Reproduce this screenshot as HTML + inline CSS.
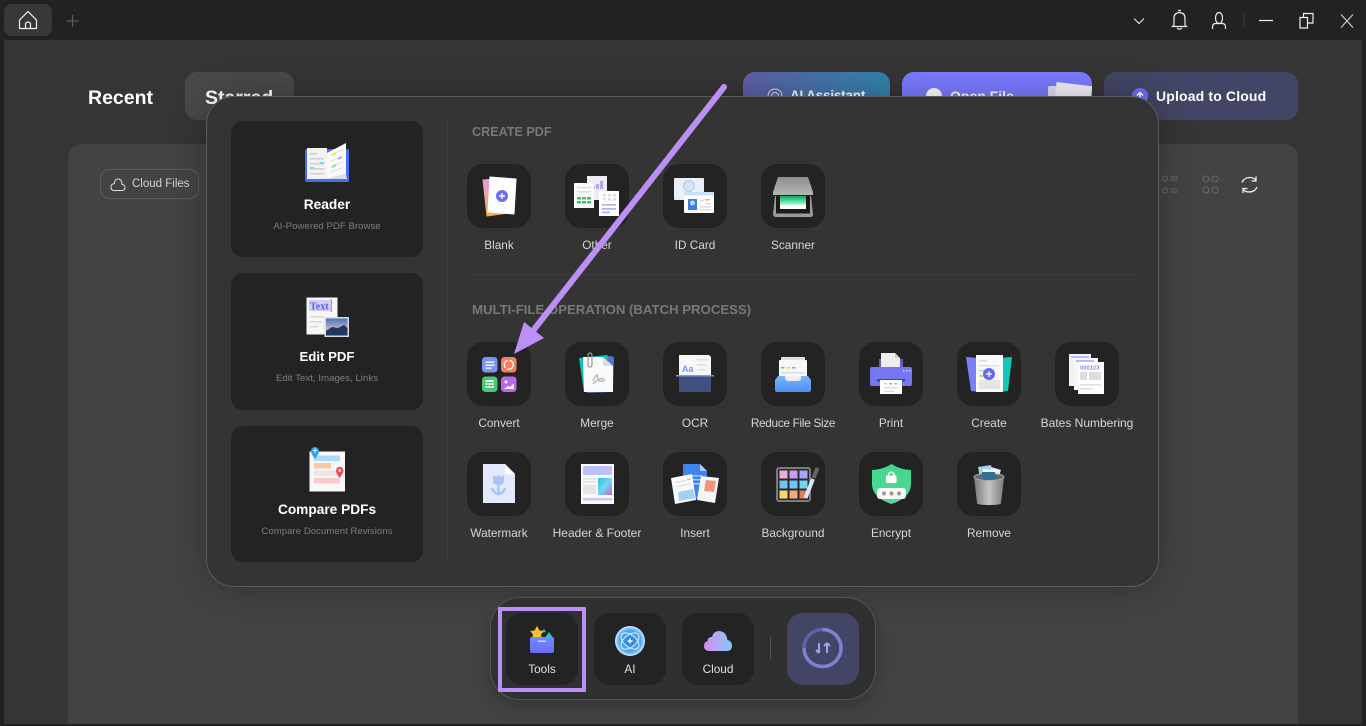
<!DOCTYPE html>
<html><head><meta charset="utf-8"><title>PDF Tools</title>
<style>
*{box-sizing:border-box;margin:0;padding:0}
html,body{width:1366px;height:726px;overflow:hidden;background:#222;font-family:"Liberation Sans",sans-serif;color:#fff}
.a{position:absolute}
.main{left:4px;top:40px;width:1358px;height:684px;background:#353535}
.btn{top:72px;height:48px;border-radius:12px;font-weight:700;font-size:14px}
.panel{left:206px;top:96px;width:953px;height:491px;background:#343434;border:1px solid #5c5c5c;border-radius:28px;box-shadow:0 0 34px rgba(0,0,0,.28)}
.lc{left:231px;width:192px;background:#232323;border-radius:12px}
.lt{left:231px;width:192px;text-align:center;font-weight:700;font-size:13.7px;line-height:18px;color:#fff}
.ls{left:231px;width:192px;text-align:center;font-size:9.5px;line-height:12px;letter-spacing:.08px;color:#7f7f7f}
.h{left:472px;font-size:13.2px;line-height:16px;font-weight:700;color:#787878}
.t{width:64px;height:64px;background:#232323;border-radius:16px}
.t svg{position:absolute;left:0;top:0;width:64px;height:64px}
.l{width:120px;text-align:center;font-size:11.8px;line-height:16px;color:#d6d6d6;white-space:nowrap}
.d{top:613px;width:72px;height:72px;background:#232323;border-radius:16px}
.d svg{position:absolute;left:0;top:0;width:72px;height:72px}
.dl{left:0;width:72px;top:48px;text-align:center;font-size:11.8px;line-height:16px;color:#e0e0e0}
svg{overflow:visible}
</style></head><body>

<!-- title bar -->
<div class="a" style="left:4px;top:4px;width:48px;height:32px;background:#383838;border-radius:8px"></div>
<svg class="a" style="left:0;top:0" width="1366" height="40" fill="none" stroke="#eee" stroke-width="1.2">
<path d="M19.500 28.500V20L28 11.500 36.500 20V28.500H19.500ZM25.500 28.500V23.500Q28 20.500 30.500 23.500V28.500"/>
<path d="M72.500 15V27M66.500 21H78.500" stroke="#5d5d5d"/>
<path d="M1134 18.500L1139 23.500 1144 18.500" stroke-width="1"/>
<path d="M1174 25V18Q1174 13 1179.500 12.500 1185 13 1185 18V25L1186.500 26.500H1172.500ZM1178 10.500H1181M1177 28Q1179.500 30.500 1182 28"/>
<ellipse cx="1219" cy="18" rx="3.500" ry="5.500"/><path d="M1212.500 29V27Q1212.500 23.500 1216 23.500H1222Q1225.500 23.500 1225.500 27V29"/>
<path d="M1244 14V26" stroke="#3a3a3a"/>
<path d="M1259 20.500H1273"/>
<path d="M1300 17.500H1307.500V28H1300ZM1303.500 17V13.500H1313V23H1308"/>
<path d="M1341 14.500L1353 27.500M1353 14.500L1341 27.500" stroke="#ccc"/>
</svg>

<div class="a main"></div>

<!-- page behind -->
<div class="a" style="left:88px;top:85px;font-weight:700;font-size:19.5px;line-height:26px;color:#fff">Recent</div>
<div class="a" style="left:185px;top:72px;width:109px;height:48px;background:#494949;border-radius:12px"></div>
<div class="a" style="left:205px;top:85px;font-weight:700;font-size:19.5px;line-height:26px">Starred</div>

<div class="a btn" style="left:743px;width:147px;background:linear-gradient(95deg,#5e5ea8,#2f84ac)"></div>
<div class="a btn" style="left:902px;width:190px;background:#7a7bff;overflow:hidden">
  <div class="a" style="left:146px;top:14px;width:32px;height:24px;background:#dcdcf6;border-radius:2px"></div>
  <div class="a" style="left:152px;top:12px;width:36px;height:40px;background:#f1f1f8;transform:rotate(7deg)"></div>
</div>
<svg class="a" style="left:765px;top:86px" width="22" height="14" fill="none" stroke="#ddd"><circle cx="10" cy="10" r="7"/><circle cx="10" cy="10" r="3.500"/></svg>
<div class="a" style="left:790px;top:87px;font-size:13.5px;font-weight:700;line-height:18px;letter-spacing:-.2px">AI Assistant</div>
<div class="a" style="left:926px;top:88px;width:16px;height:16px;border-radius:50%;background:#fff"></div>
<div class="a" style="left:950px;top:87px;font-size:14px;font-weight:700;line-height:18px">Open File</div>

<div class="a btn" style="left:1104px;width:194px;background:#434566"></div>
<div class="a" style="left:1132px;top:88px;width:16px;height:16px;border-radius:50%;background:#6f70f2"></div>
<svg class="a" style="left:1132px;top:88px" width="16" height="16" fill="none" stroke="#fff" stroke-width="1.500"><path d="M8 12.500V5M5 7.500L8 4.500 11 7.500"/></svg>
<div class="a" style="left:1156px;top:87px;font-size:14px;font-weight:700;line-height:18px;letter-spacing:.15px">Upload to Cloud</div>

<div class="a" style="left:68px;top:144px;width:1230px;height:580px;background:#434343;border-radius:14px 14px 0 0"></div>
<div class="a" style="left:100px;top:169px;width:99px;height:30px;border:1px solid #5b5b5b;border-radius:10px"></div>
<svg class="a" style="left:110px;top:176px" width="16" height="16" fill="none" stroke="#ddd" stroke-width="1"><path d="M4 14.500H12Q15 14.500 15 11.500 15 8.500 12 8.500 12 3 8 3 4.500 3 4.500 7.500 1 8 1 11 1 14.500 4 14.500Z"/></svg>
<div class="a" style="left:132px;top:176px;font-size:11.5px;line-height:16px;color:#d4d4d4">Cloud Files</div>
<svg class="a" style="left:1160px;top:174px" width="110" height="22" fill="none" stroke="#6a6a6a" stroke-width="1">
<circle cx="5" cy="4.500" r="2.500"/><circle cx="5" cy="16.500" r="2.500"/><path d="M10 3H18M10 6H18M10 15H18M10 18H18"/>
<circle cx="46" cy="5" r="3"/><circle cx="55" cy="5" r="3"/><circle cx="46" cy="16" r="3"/><circle cx="55" cy="16" r="3"/>
<path d="M82 8.500Q84 3.500 90 3.500 94 3.500 96 6.500M96 2.500V7H91.500M97 13Q95 18 89 18 85 18 83 15M83 19V14.500H87.500" stroke="#f0f0f0" stroke-width="1.300"/>
</svg>

<!-- panel -->
<div class="a panel"></div>
<div class="a" style="left:447px;top:121px;width:1px;height:441px;background:#3f3f3f"></div>
<div class="a" style="left:472px;top:274px;width:663px;height:1px;background:#3c3c3c"></div>

<div class="a lc" style="top:121px;height:136px"></div>
<div class="a lc" style="top:273px;height:137px"></div>
<div class="a lc" style="top:426px;height:136px"></div>

<svg class="a" style="left:300px;top:140px" width="54" height="46">
<rect x="5" y="9" width="44" height="33" rx="2" fill="#4a6cf0"/>
<path d="M7 8H27V39H7Z" fill="#f2f2f2"/><path d="M27 13L46 3V34L27 39Z" fill="#fafafa"/><path d="M27 39L46 34 47 39H27Z" fill="#ddd"/>
<g fill="#cfcfcf"><rect x="10" y="13" width="7" height="1.500"/><rect x="10" y="18" width="14" height="1.500"/><rect x="10" y="23" width="14" height="1.500"/><rect x="10" y="28" width="14" height="1.500"/><rect x="10" y="33" width="14" height="1.500"/></g>
<rect x="20" y="22" width="4" height="2" fill="#7fd4f5"/><rect x="10" y="27" width="4" height="2" fill="#7fd4f5"/>
<g fill="#ddd"><path d="M30 15L43 9V10L30 16ZM30 21L43 15V16L30 22ZM30 27L43 21V22L30 28ZM30 32L43 27V28L30 33Z"/></g>
<path d="M32 14L36 12V14L32 16Z" fill="#f5d84c"/><path d="M38 18L42 16V18L38 20Z" fill="#b3a9f8"/><path d="M32 26L36 24V26L32 28Z" fill="#7be0a5"/>
</svg>
<div class="a lt" style="top:196px">Reader</div>
<div class="a ls" style="top:221px">AI-Powered PDF Browse</div>

<svg class="a" style="left:300px;top:292px" width="54" height="48">
<rect x="6.500" y="5.500" width="31" height="37" fill="#f6f6f6"/>
<rect x="9" y="8" width="21" height="11" fill="#cfcffa"/><rect x="30.500" y="7" width="1.500" height="13" fill="#9a9af2"/>
<text x="10" y="17.500" font-family="Liberation Serif,serif" font-weight="700" font-size="10" fill="#5a5ae0">Text</text>
<g fill="#d8d8d8"><rect x="10" y="24" width="14" height="1.500"/><rect x="10" y="29" width="12" height="1.500"/><rect x="10" y="34" width="8" height="1.500"/></g>
<rect x="24.500" y="25" width="24.500" height="20" fill="#ddd"/>
<defs><linearGradient id="sky" x1="0" y1="0" x2="0" y2="1"><stop offset="0" stop-color="#4676b4"/><stop offset=".6" stop-color="#c9a8d0"/><stop offset="1" stop-color="#22405f"/></linearGradient></defs>
<rect x="26" y="26.500" width="21.500" height="17" fill="url(#sky)"/><path d="M26 39L32 35 38 36 44 33 47.500 36V43.500H26Z" fill="#1d3a5c"/>
</svg>
<div class="a lt" style="top:348px;font-size:13.2px">Edit PDF</div>
<div class="a ls" style="top:373px">Edit Text, Images, Links</div>

<svg class="a" style="left:300px;top:444px" width="54" height="50">
<rect x="9.500" y="7.500" width="35.500" height="40" fill="#f7f7f7"/>
<rect x="14" y="11.500" width="26" height="5.500" rx="1" fill="#a9dcfb"/><rect x="14" y="19" width="17" height="5.500" rx="1" fill="#fbc8a4"/><rect x="14" y="26.500" width="26" height="5.500" rx="1" fill="#e8e8e8"/><rect x="14" y="34" width="26" height="5.500" rx="1" fill="#fbc8cc"/>
<path d="M15 15Q11 10 11 7A4 4 0 1 1 19 7Q19 10 15 15Z" fill="#2aa5f5"/><path d="M13 6.500H17M15 4.500V8.500" stroke="#fff"/>
<path d="M39.500 34Q36 29 36 26.500A3.700 3.700 0 1 1 43.500 26.500Q43.500 29 39.500 34Z" fill="#f0494f"/><circle cx="39.700" cy="26.500" r="1.500" fill="#fcc"/>
</svg>
<div class="a lt" style="top:501px">Compare PDFs</div>
<div class="a ls" style="top:526px">Compare Document Revisions</div>

<div class="a h" style="top:124px;font-size:12.6px">CREATE PDF</div>
<div class="a h" style="top:302px">MULTI-FILE OPERATION (BATCH PROCESS)</div>

<!-- row 1 -->
<div class="a t" style="left:467px;top:164px"><svg viewBox="0 0 64 64">
<defs><linearGradient id="bl" x1="0" y1="0" x2="0" y2="1"><stop offset="0" stop-color="#e596ef"/><stop offset="1" stop-color="#f9b13f"/></linearGradient></defs>
<path d="M16 16L38 14 41 49 20 52Z" fill="url(#bl)" stroke="url(#bl)" stroke-linejoin="round"/><path d="M23 13L49 15 47 50 21 48Z" fill="#fff" stroke="#fff" stroke-linejoin="round"/><circle cx="35" cy="32" r="6" fill="#6c6cf0"/><path d="M32 32H38M35 29V35" stroke="#fff" stroke-width="1.400"/></svg></div>
<div class="a t" style="left:565px;top:164px"><svg viewBox="0 0 64 64">
<rect x="22" y="12" width="20" height="24" fill="#ececf5"/><rect x="31" y="20" width="3" height="5" fill="#b9a3ef"/><rect x="35" y="17" width="3" height="8" fill="#b9a3ef"/><rect x="27" y="22" width="3" height="3" fill="#b9a3ef"/>
<rect x="9" y="19" width="20" height="25" fill="#fafafa"/><g fill="#ddd"><rect x="12" y="23" width="14" height="1.500"/><rect x="12" y="27" width="14" height="1.500"/></g>
<g fill="#35c46e"><rect x="12" y="33" width="4" height="2.500"/><rect x="17" y="33" width="4" height="2.500"/><rect x="22" y="33" width="4" height="2.500"/><rect x="12" y="37" width="4" height="2.500"/><rect x="17" y="37" width="4" height="2.500"/><rect x="22" y="37" width="4" height="2.500"/></g>
<rect x="34" y="27" width="20" height="25" fill="#fff"/><g fill="#ddd"><rect x="38" y="30" width="3" height="2.500"/><rect x="43" y="30" width="3" height="2.500"/><rect x="48" y="30" width="3" height="2.500"/><rect x="38" y="34" width="3" height="2.500"/><rect x="43" y="34" width="3" height="2.500"/><rect x="48" y="34" width="3" height="2.500"/></g>
<g fill="#a9b4f5"><rect x="37" y="40" width="14" height="1.700"/><rect x="37" y="44" width="14" height="1.700"/><rect x="37" y="47.500" width="8" height="1.700"/></g></svg></div>
<div class="a t" style="left:663px;top:164px"><svg viewBox="0 0 64 64">
<rect x="11" y="14" width="30" height="22" rx="1" fill="#eceef8"/><circle cx="26" cy="22" r="5.500" fill="#d1e4f8" stroke="#aecdf0"/>
<rect x="21" y="28" width="30" height="21" rx="1" fill="#fff"/><rect x="21" y="28" width="30" height="3.500" fill="#cbe2fb"/>
<rect x="25" y="35" width="9" height="11" fill="#3f7be8"/><circle cx="29.500" cy="39" r="2.500" fill="#bcd5fa"/>
<g fill="#ddd"><rect x="37" y="36" width="4" height="1.500"/><rect x="43" y="39" width="5" height="1.500"/><rect x="37" y="42" width="11" height="1.500"/><rect x="37" y="45" width="11" height="1.500"/></g><rect x="42" y="35" width="5" height="1.500" fill="#f5a9a0"/></svg></div>
<div class="a t" style="left:761px;top:164px"><svg viewBox="0 0 64 64">
<defs><linearGradient id="sc" x1="0" y1="0" x2="0" y2="1"><stop offset="0" stop-color="#8f8f8f"/><stop offset="1" stop-color="#b5b5b5"/></linearGradient><linearGradient id="sg" x1="0" y1="0" x2="0" y2="1"><stop offset="0" stop-color="#1f9e62"/><stop offset=".5" stop-color="#45e098"/><stop offset="1" stop-color="#d6f8e6"/></linearGradient></defs>
<path d="M17 13H47L52 28V31H12V28Z" fill="url(#sc)"/><path d="M14 32H50L52 50Q52 53 49 53H15Q12 53 12 50Z" fill="#9a9a9a"/><rect x="15" y="32" width="34" height="17.500" fill="#1b1b1b"/><rect x="19" y="32" width="26" height="9.500" fill="url(#sg)"/><rect x="19" y="41" width="26" height="4" fill="#fff"/></svg></div>

<div class="a l" style="left:439px;top:237px">Blank</div>
<div class="a l" style="left:537px;top:237px">Other</div>
<div class="a l" style="left:635px;top:237px">ID Card</div>
<div class="a l" style="left:733px;top:237px">Scanner</div>

<!-- row 2 -->
<div class="a t" style="left:467px;top:342px"><svg viewBox="0 0 64 64">
<rect x="15" y="15" width="15.500" height="15.500" rx="3.500" fill="#7c93f4"/><g fill="#fff"><rect x="18.500" y="19.500" width="9" height="1.300"/><rect x="18.500" y="22.500" width="9" height="1.300"/><rect x="18.500" y="25.500" width="6" height="1.300"/></g>
<rect x="34" y="15" width="15.500" height="15.500" rx="3.500" fill="#f57f5f"/><circle cx="41.800" cy="22.800" r="4.500" fill="none" stroke="#fff" stroke-width="1.400" stroke-dasharray="9 2"/>
<rect x="15" y="34.500" width="15.500" height="15.500" rx="3.500" fill="#46c877"/><g fill="#fff"><rect x="18.500" y="38" width="8" height="2"/><rect x="18.500" y="41" width="2" height="2"/><rect x="21.500" y="41" width="2" height="2"/><rect x="24.500" y="41" width="2" height="2"/><rect x="18.500" y="44" width="2" height="2"/><rect x="21.500" y="44" width="2" height="2"/><rect x="24.500" y="44" width="2" height="2"/></g>
<rect x="34" y="34.500" width="15.500" height="15.500" rx="3.500" fill="#b968e8"/><circle cx="39" cy="40" r="1.500" fill="#fff"/><path d="M37 47L41 44 43 45 47 41.500V47Z" fill="#fff"/></svg></div>
<div class="a t" style="left:565px;top:342px"><svg viewBox="0 0 64 64">
<path d="M14 16L42 13 46 17 19 50Z" fill="#13c2b4"/><path d="M44 14L49 15 48 50 22 51Z" fill="#5b6fd8"/><path d="M18 15H38L48 24V50H19Z" fill="#fafafa"/><path d="M38 15V24H48Z" fill="#ddd"/>
<path d="M23 21V14Q23 11 25 11T27 14V23Q27 25 25 25T23 23V15" fill="none" stroke="#999" stroke-width="1.200"/>
<path d="M28 39Q33 29 32.500 35 32.500 41 40 38M28 42Q35 35 39 37" fill="none" stroke="#bbb" stroke-width="1.500"/></svg></div>
<div class="a t" style="left:663px;top:342px"><svg viewBox="0 0 64 64">
<path d="M16 13H46L48 15V33H16Z" fill="#f7f7f7"/><text x="19" y="30" font-size="9" font-weight="700" fill="#6f9cef">Aa</text>
<g fill="#ddd"><rect x="34" y="17" width="11" height="1.500"/><rect x="34" y="22" width="9" height="1.500"/><rect x="34" y="27" width="8" height="1.500"/></g>
<rect x="13" y="33" width="38" height="1.500" fill="#6f9cef"/><rect x="16" y="34.500" width="32" height="15.500" rx="1" fill="#40507f"/></svg></div>
<div class="a t" style="left:761px;top:342px"><svg viewBox="0 0 64 64">
<defs><linearGradient id="tr" x1="0" y1="0" x2="0" y2="1"><stop offset="0" stop-color="#7db6fb"/><stop offset="1" stop-color="#4a8ff3"/></linearGradient></defs>
<rect x="20" y="15" width="24" height="10" rx="1" fill="#dedede"/><rect x="18" y="18" width="28" height="22" rx="1" fill="#f8f8f8"/>
<rect x="20" y="25" width="3.500" height="1.500" fill="#3ed07f"/><rect x="25.500" y="25" width="3.500" height="1.500" fill="#f3cf45"/><rect x="31" y="25" width="3.500" height="1.500" fill="#64b4f5"/><rect x="20" y="30" width="24" height="1.500" fill="#ddd"/>
<path d="M14 38L17 34H47L50 38V48Q50 50 48 50H16Q14 50 14 48Z" fill="url(#tr)"/><path d="M24 34H40V37L38 39H26L24 37Z" fill="#eee"/></svg></div>
<div class="a t" style="left:859px;top:342px"><svg viewBox="0 0 64 64">
<path d="M20 17H24V26H20ZM40 17H44V26H40Z" fill="#6060c4"/><path d="M22 11H36L41 16V27H22Z" fill="#eee"/><path d="M36 11V16H41Z" fill="#ccc"/>
<rect x="11" y="25" width="42" height="19" rx="2" fill="#7676f0"/><g fill="#cdd6ff"><rect x="44" y="28" width="1.500" height="1.500"/><rect x="47" y="28" width="1.500" height="1.500"/><rect x="50" y="28" width="1.500" height="1.500"/></g>
<rect x="18" y="37" width="28" height="2.500" fill="#3f3fa8"/><rect x="21" y="38" width="22" height="14" fill="#fff"/>
<rect x="25" y="41" width="3" height="1.500" fill="#f3cf45"/><rect x="30" y="41" width="3" height="1.500" fill="#64b4f5"/><rect x="35" y="41" width="3" height="1.500" fill="#f29ac0"/><g fill="#ddd"><rect x="25" y="45" width="14" height="1.500"/><rect x="25" y="48.500" width="10" height="1.500"/></g></svg></div>
<div class="a t" style="left:957px;top:342px"><svg viewBox="0 0 64 64">
<path d="M9 15L22 16 24 50 14 49Z" fill="#7c80f5"/><path d="M42 16L55 15 51 49 42 50Z" fill="#12c6b8"/><rect x="19" y="13" width="27" height="37" fill="#fafafa"/><g fill="#ddd"><rect x="22" y="18" width="8" height="1.500"/><rect x="22" y="23" width="20" height="1.500"/></g><rect x="22" y="28" width="6" height="1.500" fill="#8fdcf2"/><rect x="22" y="33" width="5" height="2" fill="#f3d555"/><rect x="22" y="38" width="21" height="9" fill="#e5e5e5"/><circle cx="32" cy="32" r="6" fill="#6868f0"/><path d="M29 32H35M32 29V35" stroke="#fff" stroke-width="1.300"/></svg></div>
<div class="a t" style="left:1055px;top:342px"><svg viewBox="0 0 64 64">
<rect x="14" y="12" width="22" height="32" fill="#f2f2f2"/><rect x="16" y="14" width="18" height="2" fill="#b9b9f5"/>
<rect x="19" y="16" width="24" height="32" fill="#f7f7f7"/><rect x="21" y="18" width="18" height="2" fill="#b9b9f5"/>
<rect x="23" y="20" width="26" height="32" fill="#fff"/><text x="25" y="27.500" font-size="5.800" font-weight="700" fill="#8585ee">000123</text>
<rect x="25" y="30" width="7" height="8" fill="#ddd"/><rect x="34" y="30" width="12" height="8" fill="#ddd"/><rect x="25" y="42" width="21" height="1.500" fill="#ddd"/><rect x="25" y="46" width="13" height="1.500" fill="#ddd"/></svg></div>

<div class="a l" style="left:439px;top:415px">Convert</div>
<div class="a l" style="left:537px;top:415px">Merge</div>
<div class="a l" style="left:635px;top:415px">OCR</div>
<div class="a l" style="left:733px;top:415px;letter-spacing:-.3px">Reduce File Size</div>
<div class="a l" style="left:831px;top:415px">Print</div>
<div class="a l" style="left:929px;top:415px">Create</div>
<div class="a l" style="left:1027px;top:415px;font-size:12px">Bates Numbering</div>

<!-- row 3 -->
<div class="a t" style="left:467px;top:452px"><svg viewBox="0 0 64 64">
<path d="M16 12H38L48 22V51H16Z" fill="#e4e8fc"/><path d="M38 12V22H48Z" fill="#fff"/>
<path d="M26 23L29 25 31.500 23 34 25 37 23V29Q37 33 31.500 33 26 33 26 29Z" fill="#a9c2f7"/><path d="M31.500 33V43M25 36Q26 41 31.500 42 37 41 38 36" fill="none" stroke="#a9c2f7" stroke-width="2.500"/></svg></div>
<div class="a t" style="left:565px;top:452px"><svg viewBox="0 0 64 64">
<rect x="16" y="12" width="33" height="40" fill="#fafafa"/><rect x="18" y="14" width="29" height="9" rx="1" fill="#bcc0f7"/>
<g fill="#ddd"><rect x="18" y="26" width="13" height="1.500"/><rect x="18" y="29" width="13" height="1.500"/></g><rect x="18" y="33" width="13" height="9" fill="#e5e5e5"/>
<defs><linearGradient id="hf" x1="0" y1="0" x2="1" y2="1"><stop offset="0" stop-color="#2fbfe0"/><stop offset=".5" stop-color="#72d8f0"/><stop offset="1" stop-color="#c45fd8"/></linearGradient></defs><rect x="33" y="26" width="14" height="17" fill="url(#hf)"/><rect x="18" y="46" width="29" height="2.500" fill="#c6c9f7"/></svg></div>
<div class="a t" style="left:663px;top:452px"><svg viewBox="0 0 64 64">
<path d="M20 12H37L44 19V47H20Z" fill="#3e84ee"/><path d="M37 12V19H44Z" fill="#a9c9fa"/><g fill="#a9c9fa"><rect x="28" y="23" width="11" height="1.500"/><rect x="28" y="27" width="11" height="1.500"/><rect x="28" y="31" width="11" height="1.500"/></g>
<path d="M38 24L56 26 52 51 34 48Z" fill="#f6f6f6"/><path d="M43 28L53 29 51 40 41 39Z" fill="#f5947c"/>
<path d="M8 26L29 22 33 48 12 52Z" fill="#fbfbfb"/><path d="M15 40L30 37 32 46 16 49Z" fill="#9fd1f5"/><rect x="24" y="27" width="4" height="1.300" fill="#e2c05a" transform="rotate(-11 24 27)"/><g fill="#ddd"><rect x="12" y="30" width="11" height="1.300" transform="rotate(-11 12 30)"/><rect x="13" y="34" width="15" height="1.300" transform="rotate(-11 13 34)"/></g></svg></div>
<div class="a t" style="left:761px;top:452px"><svg viewBox="0 0 64 64">
<rect x="16" y="16" width="33" height="33" rx="2" fill="#2a2a2a" stroke="#7b7b7b" stroke-width="2"/>
<rect x="18.500" y="18.500" width="8" height="8" fill="#f4a9d8"/><rect x="28.500" y="18.500" width="8" height="8" fill="#c79cf5"/><rect x="38.500" y="18.500" width="8" height="8" fill="#a6a6f5"/>
<rect x="18.500" y="28.500" width="8" height="8" fill="#6fc3f5"/><rect x="28.500" y="28.500" width="8" height="8" fill="#6fc3f5"/><rect x="38.500" y="28.500" width="8" height="8" fill="#6fd8e8"/>
<rect x="18.500" y="38.500" width="8" height="8" fill="#f8d870"/><rect x="28.500" y="38.500" width="8" height="8" fill="#f5a878"/><rect x="38.500" y="38.500" width="8" height="8" fill="#e87a60"/>
<path d="M44.500 46L52 27" stroke="#dce6fb" stroke-width="4"/><path d="M52.500 26L56.500 16" stroke="#666" stroke-width="4"/></svg></div>
<div class="a t" style="left:859px;top:452px"><svg viewBox="0 0 64 64">
<defs><linearGradient id="sh" x1="0" y1="0" x2="0" y2="1"><stop offset="0" stop-color="#3ddb8a"/><stop offset="1" stop-color="#5cd29a"/></linearGradient></defs>
<path d="M32.500 12Q42 18 52 18V33Q51 46 32.500 52 14 46 13 33V18Q23 18 32.500 12Z" fill="url(#sh)"/><rect x="27" y="23.500" width="10.500" height="7.500" rx="1.500" fill="#fff"/><path d="M29.500 23.500V22Q32.200 18.500 35 22V23.500" fill="none" stroke="#fff" stroke-width="1.500"/>
<rect x="18" y="36" width="29" height="11" rx="3" fill="#fafafa"/><g fill="#999"><circle cx="25" cy="41.500" r="2"/><circle cx="32.500" cy="41.500" r="2"/><circle cx="40" cy="41.500" r="2"/></g></svg></div>
<div class="a t" style="left:957px;top:452px"><svg viewBox="0 0 64 64">
<defs><linearGradient id="tc" x1="0" y1="0" x2="1" y2="0"><stop offset="0" stop-color="#777"/><stop offset=".5" stop-color="#c4c4c4"/><stop offset="1" stop-color="#7c7c7c"/></linearGradient></defs>
<path d="M21 15L34 13 36 26H23Z" fill="#a9d0e8"/><path d="M34 15L44 18 41 27H33Z" fill="#eee"/><path d="M26 17L38 18 37 30H26Z" fill="#fafafa"/>
<path d="M17 25H47L44 51Q44 53 32 53 20 53 20 51Z" fill="url(#tc)"/><ellipse cx="32" cy="25" rx="15" ry="3.500" fill="#666" stroke="#aaa"/><rect x="25" y="20" width="13" height="7.500" fill="#2f6f96"/></svg></div>

<div class="a l" style="left:439px;top:525px">Watermark</div>
<div class="a l" style="left:537px;top:525px;font-size:12px">Header &amp; Footer</div>
<div class="a l" style="left:635px;top:525px">Insert</div>
<div class="a l" style="left:733px;top:525px">Background</div>
<div class="a l" style="left:831px;top:525px">Encrypt</div>
<div class="a l" style="left:929px;top:525px">Remove</div>

<!-- dock -->
<div class="a" style="left:490px;top:597px;width:386px;height:103px;background:#303030;border:1px solid #555;border-radius:30px;box-shadow:0 6px 18px rgba(0,0,0,.22)"></div>
<div class="a d" style="left:506px"><svg viewBox="0 0 72 72">
<defs><linearGradient id="dt" x1="0" y1="0" x2="0" y2="1"><stop offset="0" stop-color="#6f8cff"/><stop offset="1" stop-color="#6a6cf5"/></linearGradient></defs>
<path d="M31 13L33.500 17.500 38 18 35 21.500 36 26H26L27 21.500 24 18 28.500 17.500Z" fill="#f7c32c"/><path d="M43 19L48 26H38Z" fill="#1bc9b8"/><circle cx="38" cy="18" r="1.500" fill="#35d07f"/>
<rect x="24" y="24" width="24" height="16" rx="2" fill="url(#dt)"/><rect x="32" y="27.500" width="8" height="1.500" fill="#c8d4ff"/></svg><div class="a dl">Tools</div></div>
<div class="a d" style="left:594px"><svg viewBox="0 0 72 72">
<defs><radialGradient id="ai"><stop offset="0" stop-color="#2a78d8"/><stop offset=".75" stop-color="#58aef5"/><stop offset="1" stop-color="#d0ecff"/></radialGradient></defs>
<circle cx="36" cy="28" r="15" fill="url(#ai)"/><ellipse cx="36" cy="28" rx="10.500" ry="6" fill="none" stroke="#d8f0ff" transform="rotate(40 36 28)"/><ellipse cx="36" cy="28" rx="10.500" ry="6" fill="none" stroke="#d8f0ff" transform="rotate(-40 36 28)"/><path d="M33.500 28H38.500M36 25.500V30.500" stroke="#fff" stroke-width="1.500"/></svg><div class="a dl">AI</div></div>
<div class="a d" style="left:682px"><svg viewBox="0 0 72 72">
<defs><linearGradient id="cl" x1="0" y1="0" x2="1" y2="0"><stop offset="0" stop-color="#d98cf0"/><stop offset="1" stop-color="#85c8fa"/></linearGradient></defs>
<path d="M28 38H45Q50 38 50 32.500 50 28 45.500 27 44 18 37 18 31.500 18 30 24 26 23.500 25.500 28 22 29 22 33 22 38 28 38Z" fill="url(#cl)"/></svg><div class="a dl">Cloud</div></div>
<div class="a" style="left:770px;top:636px;width:1px;height:24px;background:#555"></div>
<div class="a" style="left:787px;top:613px;width:72px;height:72px;background:#434566;border-radius:16px"></div>
<svg class="a" style="left:787px;top:613px" width="72" height="72" fill="none">
<circle cx="35.500" cy="35" r="18.500" stroke="#5f62a3" stroke-width="3.500"/>
<path d="M17 35A18.500 18.500 0 1 0 35.500 16.500" stroke="#7e80d8" stroke-width="3.500"/>
<path d="M32 30V40M29 37L32 40M40 40V30M40 30L43 33M40 30L37 33" stroke="#a0a2f0" stroke-width="2"/></svg>

<!-- highlight -->
<div class="a" style="left:498px;top:607px;width:88px;height:85px;border:4px solid #bc8ff5;border-radius:1px"></div>

<!-- arrow -->
<svg class="a" style="left:0;top:0;pointer-events:none" width="1366" height="726" fill="none">
<path d="M724 87L532 332" stroke="#bc8ff5" stroke-width="6" stroke-linecap="round"/>
<path d="M514 354L524 322 544 338Z" fill="#bc8ff5"/>
</svg>
</body></html>
